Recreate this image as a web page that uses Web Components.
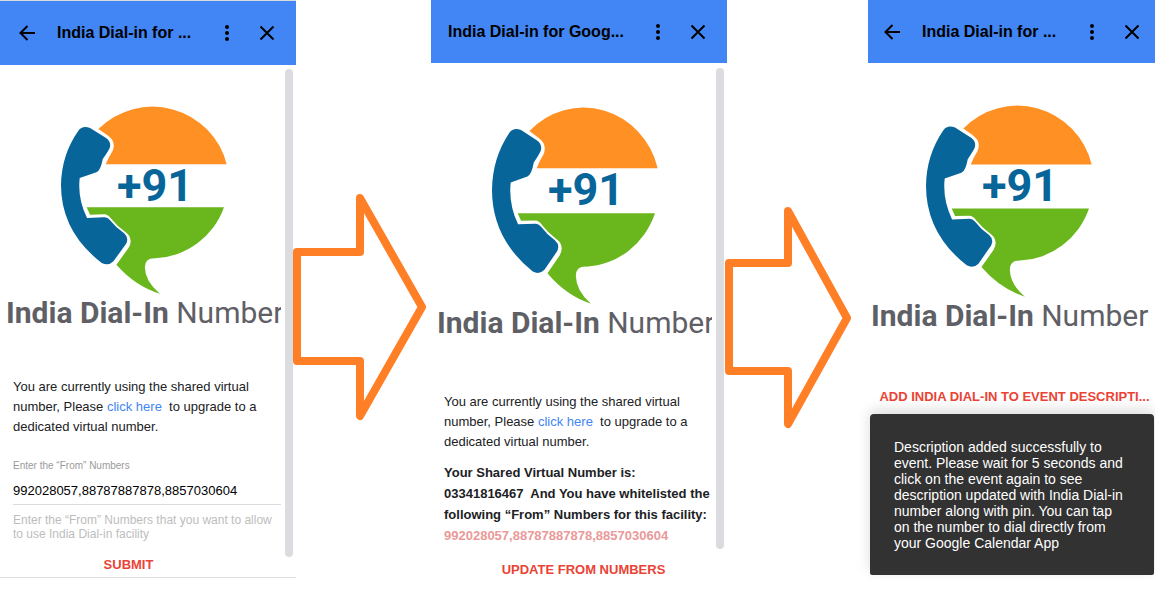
<!DOCTYPE html>
<html lang="en">
<head>
<meta charset="utf-8">
<title>India Dial-in</title>
<style>
body { margin: 0; background: #fff; font-family: "Liberation Sans", Arial, sans-serif; font-size: 13px; color: #202124; }
</style>
</head>
<body>
<dial-flow></dial-flow>
<script>
const define = (name, html, setup) => customElements.define(name, class extends HTMLElement {
  constructor() {
    super();
    this.attachShadow({ mode: "open" }).innerHTML = html;
  }
  connectedCallback() { if (setup) setup(this, this.shadowRoot); }
});

define("addon-header", `
<style>
:host { display: flex; align-items: center; height: var(--bar, 63px); background: #4285f4; color: #000; padding: 0 var(--right, 17px) 0 var(--left, 17px); box-sizing: border-box; }
h2 { flex: 1; min-width: 0; margin: 0; font-size: 16px; line-height: 20px; font-weight: bold; white-space: nowrap; overflow: hidden; }
button { border: 0; background: none; padding: 0; width: 24px; height: 24px; margin-right: 16px; color: inherit; }
button:last-child { margin-right: 0; }
.back { margin: 0 18px 0 -2px; }
:host([no-back]) .back { display: none; }
svg { display: block; width: 24px; height: 24px; }
</style>
<button class="back" aria-label="Back"><svg viewBox="0 0 24 24"><path d="M20 12H6M12.500 5L5.500 12L12.500 19" fill="none" stroke="currentColor" stroke-width="2"/></svg></button>
<h2><slot></slot></h2>
<button aria-label="More options"><svg viewBox="0 0 24 24"><circle cx="12" cy="6" r="2"/><circle cx="12" cy="12" r="2"/><circle cx="12" cy="18" r="2"/></svg></button>
<button aria-label="Close"><svg viewBox="0 0 24 24"><path d="M5.500 5.500L18.500 18.500M18.500 5.500L5.500 18.500" fill="none" stroke="currentColor" stroke-width="2"/></svg></button>
`);

define("addon-panel", `
<style>
:host { display: block; min-width: 0; }
.body { display: flex; }
.content { flex: 1; min-width: 0; }
.thumb { flex: none; width: 8px; margin: var(--thumb-top, 5px) 3px 0 4px; height: var(--thumb, 481px); border-radius: 4px; background: #dadce0; }
:host([no-scroll]) .thumb { display: none; }
</style>
<slot name="header"></slot>
<div class="body"><div class="content"><slot></slot></div><div class="thumb"></div></div>
`);

define("brand-logo", `
<style>
:host { display: block; font-family: Roboto, sans-serif; overflow: hidden; }
.mark { display: grid; width: 166px; height: var(--mark, 188px); margin-left: var(--inset, 61px); }
.mark > * { grid-area: 1 / 1; }
svg { width: 100%; height: 100%; display: block; }
.code { margin-left: 56px; align-self: start; margin-top: var(--code, 56px); font-size: 45px; line-height: 48px; font-weight: bold; color: #086599; }
.name { margin: 1px 0 0 var(--name, 6px); font-size: 30px; line-height: 36px; font-weight: 400; white-space: nowrap; color: #5f6066; }
b { font-weight: bold; }
</style>
<div class="mark">
<svg viewBox="183 48 497 564" preserveAspectRatio="none" aria-hidden="true">
<path fill="#ff9024" d="M295 117A229 229 0 0 1 679 223H317Q327 199 337 184Q345 167 337 151Q332 143 322 136Z"/>
<path fill="#6ab71d" d="M260 352H671A229 229 0 0 1 465 505Q434 504 434 532Q435 575 479 611Q405 588 349 524L385 474Q397 455 387 437Q383 431 372 423Q351 408 334 387Q324 373 312 373L270 374Z"/>
<path fill="#086599" d="M235 122Q247 106 270 114L318 144Q334 155 329 173Q326 181 308 207Q302 241 289 247L239 264Q232 325 261 384L312 382Q322 381 330 391Q348 414 372 430Q387 443 378 461L340 514Q325 529 305 519Q183 425 183 285Q184 195 235 122Z"/>
</svg>
<span class="code">+91</span>
</div>
<p class="name"><b>India Dial-In</b> Number</p>
`);

define("upgrade-note", `
<style>
:host { display: block; margin-left: 13px; }
p { margin: 0; font-size: 13px; line-height: 20px; white-space: nowrap; }
a { color: #4285f4; text-decoration: none; }
</style>
<p>You are currently using the shared virtual<br>number, Please <a href="#upgrade">click here</a>&nbsp; to upgrade to a<br>dedicated virtual number.</p>
`);

define("from-field", `
<style>
:host { display: block; margin-left: 13px; }
label { display: block; font-size: 10px; line-height: 12px; color: #9a9a9a; }
input { display: block; box-sizing: border-box; width: 100%; height: 33px; border: 0; border-bottom: 1px solid #dadce0; outline: 0; padding: 4px 0 0; margin: 0; font: inherit; font-size: 13px; color: #000; background: none; }
p { margin: 8px 0 0; font-size: 12px; line-height: 14px; color: #bdbdbd; }
</style>
<label for="from">Enter the “From” Numbers</label>
<input id="from" value="992028057,88787887878,8857030604" aria-describedby="hint">
<p id="hint">Enter the “From” Numbers that you want to allow<br>to use India Dial-in facility</p>
`);

define("text-action", `
<style>
:host { display: flex; justify-content: center; }
button { border: 0; background: none; padding: 0; font: inherit; font-size: 13px; line-height: 20px; font-weight: bold; color: #ea4335; white-space: nowrap; }
</style>
<button><slot></slot></button>
`);

define("number-summary", `
<style>
:host { display: block; margin-left: 13px; }
p { margin: 0; font-size: 13px; line-height: 21px; font-weight: bold; white-space: nowrap; }
.list { color: #ea9999; }
</style>
<p>Your Shared Virtual Number is:<br>03341816467&nbsp; And You have whitelisted the<br>following “From” Numbers for this facility:</p>
<p class="list">992028057,88787887878,8857030604</p>
`);

define("toast-note", `
<style>
:host { display: block; margin: 0 1px 0 2px; padding: 25px 24px 23px; background: #323232; color: #fff; border-radius: 4px 4px 2px 2px; font-size: 14px; line-height: 16px; box-shadow: 0 -4px 14px rgba(0,0,0,.14); }
p { margin: 0; padding-bottom: 1px; }
</style>
<p role="status"><slot></slot></p>
`);

define("flow-arrow", `
<style>
:host { display: block; min-width: 0; }
svg { display: block; overflow: visible; }
path { fill: none; stroke: #ff7f27; stroke-width: 8; stroke-linejoin: round; }
</style>
<svg aria-hidden="true"><path/></svg>
`, (el, root) => {
  const [w, h] = el.getAttribute("box").split(" ");
  const svg = root.querySelector("svg");
  svg.setAttribute("viewBox", `0 0 ${w} ${h}`);
  svg.setAttribute("width", w);
  svg.setAttribute("height", h);
  root.querySelector("path").setAttribute("d", el.getAttribute("shape"));
});

define("dial-flow", `
<style>
:host { display: grid; grid-template-columns: 296fr 135fr 296fr 141fr 287fr; align-items: start; }
.enter { border-top: 1px solid #dadce0; border-bottom: 1px solid #dadce0; --thumb: 488px; --thumb-top: 4px; }
.enter addon-header { --bar: 64px; }
.enter brand-logo { padding-top: 41px; }
.enter upgrade-note { margin-top: 46px; }
.enter from-field { margin-top: 23px; }
.enter text-action { margin: 14px 24px 2px 0; }
.review brand-logo { --mark: 197px; --code: 59px; padding-top: 44px; }
.review upgrade-note { margin-top: 51px; }
.review number-summary { margin-top: 10px; }
.review text-action { margin: 14px 0 0 24px; }
.done addon-header { --left: 14px; --right: 11px; }
.done brand-logo { --mark: 192px; --inset: 58px; --code: 57px; --name: 3px; padding-top: 42px; }
.done text-action { margin-top: 53px; margin-left: 6px; }
.done toast-note { margin-top: 7px; }
.first { margin: 193px 0 0 -3px; }
.second { margin: 206px 0 0 -2px; }
</style>
<addon-panel class="enter">
  <addon-header slot="header">India Dial-in for ...</addon-header>
  <brand-logo></brand-logo>
  <upgrade-note></upgrade-note>
  <from-field></from-field>
  <text-action>SUBMIT</text-action>
</addon-panel>
<flow-arrow class="first" box="134 228" shape="M4 59H67V5L129 114L67 223V168H4Z"></flow-arrow>
<addon-panel class="review">
  <addon-header slot="header" no-back>India Dial-in for Goog...</addon-header>
  <brand-logo></brand-logo>
  <upgrade-note></upgrade-note>
  <number-summary></number-summary>
  <text-action>UPDATE FROM NUMBERS</text-action>
</addon-panel>
<flow-arrow class="second" box="128 222" shape="M4 57H63V5L122 112L63 218V165H4Z"></flow-arrow>
<addon-panel class="done" no-scroll>
  <addon-header slot="header">India Dial-in for ...</addon-header>
  <brand-logo></brand-logo>
  <text-action>ADD INDIA DIAL-IN TO EVENT DESCRIPTI...</text-action>
  <toast-note>Description added successfully to event. Please wait for 5 seconds and click on the event again to see description updated with India Dial-in number along with pin. You can tap on the number to dial directly from your Google Calendar App</toast-note>
</addon-panel>
`);
</script>
</body>
</html>
